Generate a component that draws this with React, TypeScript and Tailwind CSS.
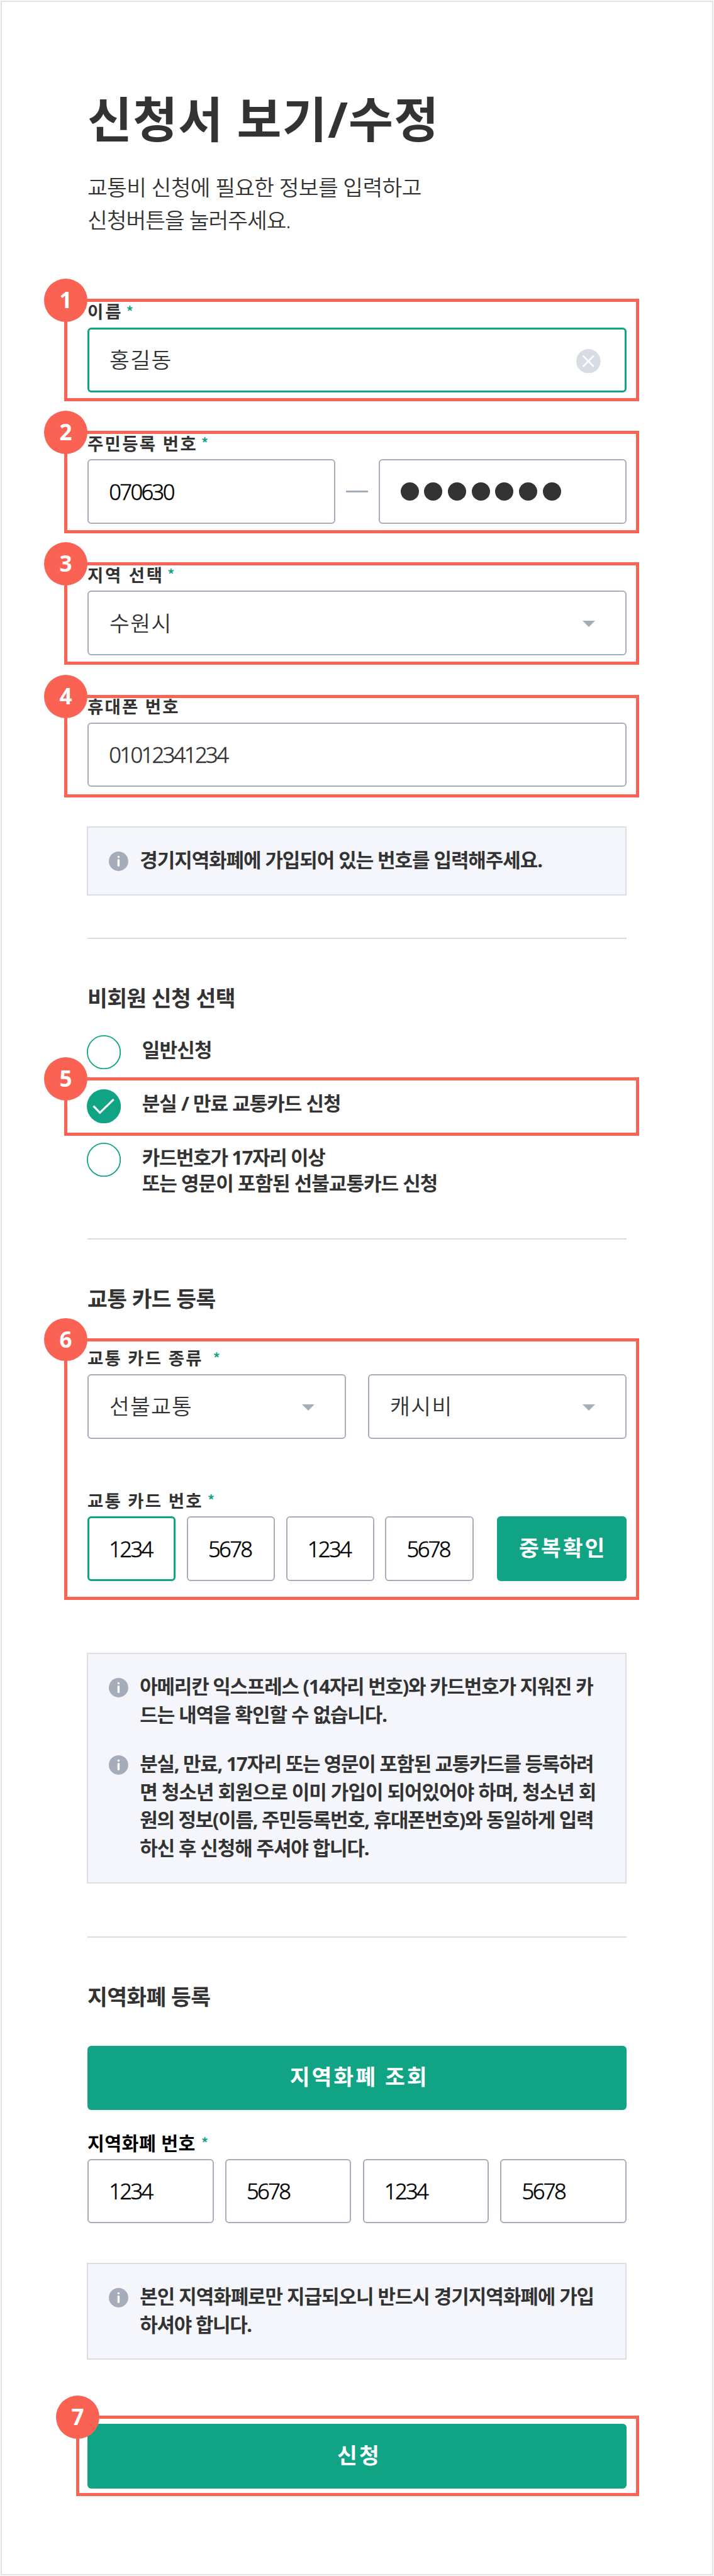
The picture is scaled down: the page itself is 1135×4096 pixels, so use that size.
import type { ReactNode } from "react";

const cn = (...c: (string | false | undefined)[]) => c.filter(Boolean).join(" ");

function Callout({ n, className }: { n: number; className: string }) {
  return (
    <div className={cn("pointer-events-none absolute z-10 border-[5px] border-[#fa6353]", className)}>
      <span className="absolute -left-[36.8px] -top-[36.8px] flex h-[68.6px] w-[68.6px] items-center justify-center rounded-full bg-[#fa6353] pb-[1px] text-[35px] leading-[40px] font-bold text-white">
        {n}
      </span>
    </div>
  );
}

function Label({ children, className, star }: { children: ReactNode; className: string; star?: string }) {
  return (
    <div className="flex h-[36px] items-start">
      <span className={cn("whitespace-nowrap leading-[36px] font-bold", className)}>{children}</span>
      {star && (
        <span className={cn("-mt-[1.8px] font-['Noto_Sans_CJK_KR',sans-serif] text-[24px] leading-[36px] font-medium text-[#10a485]", star)}>
          *
        </span>
      )}
    </div>
  );
}

function Box({ children, className, active }: { children?: ReactNode; className?: string; active?: boolean }) {
  return (
    <div
      className={cn(
        "flex h-[102.8px] items-center rounded-[6px] bg-white",
        active ? "border-[3px] border-[#10a485] px-[32px]" : "border-2 border-[#a5adbb] px-[33px]",
        className,
      )}
    >
      {children}
    </div>
  );
}

const Hangul = ({ children, className }: { children: ReactNode; className: string }) => (
  <span className={cn("text-[34.6px] leading-[50px] font-[350] whitespace-nowrap", className)}>{children}</span>
);

const Digits = ({ children, className }: { children: ReactNode; className?: string }) => (
  <span
    className={cn(
      "-ml-[0.8px] text-[34.6px] leading-[50px] font-light tracking-[-2.65px] whitespace-nowrap [-webkit-text-stroke:0.55px_currentColor]",
      className ?? "text-black",
    )}
  >
    {children}
  </span>
);

const Arrow = () => (
  <svg viewBox="0 0 20 10" className="mt-[3px] ml-auto mr-[15px] h-[10px] w-[20px]">
    <path d="M0 0h20L10 10z" fill="#a5adbb" />
  </svg>
);

const InfoIcon = () => (
  <svg viewBox="0 0 54 54" className="mt-[8.9px] mr-[18.4px] h-[30.9px] w-[30.9px] shrink-0">
    <circle cx="27" cy="27" r="27" fill="#a5adbb" />
    <circle cx="27" cy="15" r="3" fill="#fff" />
    <rect x="24" y="21" width="6" height="21" rx="3" fill="#fff" />
  </svg>
);

type Line = [string, string];

function Info({ items, className }: { items: Line[][]; className: string }) {
  return (
    <div
      className={cn(
        "flex flex-col gap-[33.9px] border-2 border-[#dbdfe5] bg-[#f5f6fc] pt-[29.4px] pb-[32px] pl-[32.6px]",
        className,
      )}
    >
      {items.map((lines, i) => (
        <div key={i} className="flex">
          <InfoIcon />
          <p className="text-[31px] leading-[44.6px] font-bold whitespace-nowrap">
            {lines.map(([text, tracking]) => (
              <span key={text} className={cn("block", tracking)}>
                {text}
              </span>
            ))}
          </p>
        </div>
      ))}
    </div>
  );
}

function Radio({ checked, children, className }: { checked?: boolean; children: ReactNode; className?: string }) {
  return (
    <div className={cn("relative flex items-start", className)}>
      <svg viewBox="0 0 54 54" className="-ml-[1.4px] h-[54.2px] w-[54.2px] shrink-0">
        {checked ? (
          <>
            <circle cx="27" cy="27" r="27" fill="#10a485" />
            <path d="M10.5 26.5l10.2 10.7L42.5 16" fill="none" stroke="#fff" strokeWidth="3.2" />
          </>
        ) : (
          <circle cx="27" cy="27" r="26.1" fill="#fff" stroke="#10a485" strokeWidth="1.8" />
        )}
      </svg>
      <div className="ml-[34px] flex flex-col pt-[2.8px] text-[31px] leading-[40.9px] font-bold whitespace-nowrap">{children}</div>
    </div>
  );
}

const Heading = ({ children, className }: { children: ReactNode; className: string }) => (
  <h2 className={cn("text-[34.6px] leading-[40px] font-bold tracking-[-0.65px] whitespace-nowrap", className)}>{children}</h2>
);

const Rule = ({ className }: { className: string }) => <div className={cn("h-[2px] bg-[#d8dde3]", className)} />;

const Button = ({ children, className }: { children: ReactNode; className: string }) => (
  <button
    type="button"
    className={cn(
      "flex h-[102.8px] items-center justify-center rounded-[6px] bg-[#10a485] pb-[3.4px] text-[34.6px] leading-[50px] font-bold text-white whitespace-nowrap",
      className,
    )}
  >
    {children}
  </button>
);

export default function App() {
  return (
    <div className="h-[4096px] w-[1135px] overflow-hidden bg-white p-px font-['Noto_Sans','Noto_Sans_CJK_KR',sans-serif] text-[#333333]">
      <div className="h-full border-2 border-[#dfe2e7] px-[136px]">
        <h1 className="mt-[137.4px] h-[100px] text-[77.1px] leading-[100px] font-bold tracking-[1.2px] whitespace-nowrap">
          신청서 보기/수정
        </h1>
        <p className="mt-[32.1px] text-[34.5px] leading-[51.4px] font-[350] whitespace-nowrap">
          <span className="block tracking-[-0.65px]">교통비 신청에 필요한 정보를 입력하고</span>
          <span className="block tracking-[-1px]">신청버튼을 눌러주세요.</span>
        </p>

        <div className="relative mt-[103px] w-[857px]">
          <Label className="text-[27.5px] tracking-[2.9px]" star="ml-[5px]">이름</Label>
          <Box active className="mt-[6.7px]">
            <Hangul className="tracking-[1.5px]">홍길동</Hangul>
            <svg viewBox="0 0 38 38" className="mt-[3px] mr-[6px] ml-auto h-[38.6px] w-[38.6px]">
              <circle cx="19" cy="19" r="19" fill="#d8dde3" />
              <path d="M11.2 11.2l15.6 15.6M26.8 11.2L11.2 26.8" stroke="#fff" strokeWidth="2.6" strokeLinecap="round" />
            </svg>
          </Box>
          <Callout n={1} className="-top-[3.1px] -right-[20px] -bottom-[14.7px] -left-[37px]" />
        </div>

        <div className="relative mt-[63.8px] w-[857px]">
          <Label className="text-[27.5px] tracking-[2.3px]" star="ml-[5.7px]">주민등록 번호</Label>
          <div className="mt-[6.7px] flex items-center">
            <Box className="w-[394px]">
              <Digits>070630</Digits>
            </Box>
            <div className="mx-[17px] h-[3.4px] w-[35px] bg-[#a5adbb]" />
            <Box className="ml-auto w-[394.5px]">
              <div className="flex gap-[8.7px]">
                {Array.from({ length: 7 }, (_, i) => (
                  <span key={i} className="h-[29px] w-[29px] rounded-full bg-[#333333]" />
                ))}
              </div>
            </Box>
          </div>
          <Callout n={2} className="-top-[2.8px] -right-[20px] -bottom-[14.6px] -left-[37px]" />
        </div>

        <div className="relative mt-[63.7px] w-[857px]">
          <Label className="text-[27.5px] tracking-[2.65px]" star="ml-[5.3px]">지역 선택</Label>
          <Box className="mt-[6.7px]">
            <Hangul className="tracking-[1.5px]">수원시</Hangul>
            <Arrow />
          </Box>
          <Callout n={3} className="-top-[2.8px] -right-[20px] -bottom-[14.4px] -left-[37px]" />
        </div>

        <div className="relative mt-[63.7px] w-[857px]">
          <Label className="text-[27.5px] tracking-[2.2px]">휴대폰 번호</Label>
          <Box className="mt-[6.7px]">
            <Digits className="text-[#333333]">01012341234</Digits>
          </Box>
          <Callout n={4} className="-top-[1.2px] -right-[20px] -bottom-[16.2px] -left-[37px]" />
        </div>

        <Info
          className="mt-[62.5px] w-[858px] -ml-[0.6px]"
          items={[[["경기지역화폐에 가입되어 있는 번호를 입력해주세요.", "tracking-[-1.07px]"]]]}
        />

        <Rule className="mt-[67.2px] w-[857px]" />

        <Heading className="mt-[74px]">비회원 신청 선택</Heading>
        <div className="mt-[38.8px] flex w-[857px] flex-col gap-[31.5px]">
          <Radio className="h-[54.2px]">
            <span className="tracking-[-0.8px]">일반신청</span>
          </Radio>
          <Radio checked className="h-[54.2px]">
            <span className="tracking-[-0.97px]">분실 / 만료 교통카드 신청</span>
            <Callout n={5} className="-top-[18.7px] -right-[20px] -bottom-[19.9px] -left-[37px]" />
          </Radio>
          <Radio>
            <span className="tracking-[-1.36px]">카드번호가 17자리 이상</span>
            <span className="tracking-[-0.95px]">또는 영문이 포함된 선불교통카드 신청</span>
          </Radio>
        </div>

        <Rule className="mt-[67.2px] w-[857px]" />

        <Heading className="mt-[74px]">교통 카드 등록</Heading>
        <div className="relative mt-[57.4px] w-[857px]">
          <Label className="text-[27.5px] tracking-[2.2px]" star="ml-[15.8px]">교통 카드 종류</Label>
          <div className="mt-[6.5px] flex justify-between">
            <Box className="w-[411px]">
              <Hangul className="tracking-[1.2px]">선불교통</Hangul>
              <Arrow />
            </Box>
            <Box className="w-[411px]">
              <Hangul className="tracking-[1.4px]">캐시비</Hangul>
              <Arrow />
            </Box>
          </div>
          <div className="mt-[80.9px]">
            <Label className="text-[27.5px] tracking-[2.2px]" star="ml-[7px]">교통 카드 번호</Label>
          </div>
          <div className="mt-[6.5px] flex">
            <div className="flex gap-[17.4px]">
              {["1234", "5678", "1234", "5678"].map((v, i) => (
                <Box key={i} active={i === 0} className="w-[140.4px]">
                  <Digits>{v}</Digits>
                </Box>
              ))}
            </div>
            <Button className="ml-auto w-[205.6px] pl-[3px] tracking-[3px]">중복확인</Button>
          </div>
          <Callout n={6} className="-top-[14.9px] -right-[20px] -bottom-[30px] -left-[37px]" />
        </div>

        <Info
          className="mt-[113.9px] w-[858px] -ml-[0.6px]"
          items={[
            [
              ["아메리칸 익스프레스 (14자리 번호)와 카드번호가 지워진 카", "tracking-[-1.23px]"],
              ["드는 내역을 확인할 수 없습니다.", "tracking-[-1.06px]"],
            ],
            [
              ["분실, 만료, 17자리 또는 영문이 포함된 교통카드를 등록하려", "tracking-[-1.31px]"],
              ["면 청소년 회원으로 이미 가입이 되어있어야 하며, 청소년 회", "tracking-[-0.99px]"],
              ["원의 정보(이름, 주민등록번호, 휴대폰번호)와 동일하게 입력", "tracking-[-1.29px]"],
              ["하신 후 신청해 주셔야 합니다.", "tracking-[-1.12px]"],
            ],
          ]}
        />

        <Rule className="mt-[84.7px] w-[857px]" />

        <Heading className="mt-[73.9px]">지역화폐 등록</Heading>
        <Button className="mt-[57.4px] w-[857px] pl-[7.4px] tracking-[3px]">지역화폐 조회</Button>

        <div className="mt-[34.9px]">
          <Label className="text-[29.2px] tracking-[0.45px] text-black" star="ml-[9px]">지역화폐 번호</Label>
        </div>
        <div className="mt-[6.2px] flex w-[857px] justify-between">
          {["1234", "5678", "1234", "5678"].map((v, i) => (
            <Box key={i} className="w-[200.6px]">
              <Digits>{v}</Digits>
            </Box>
          ))}
        </div>

        <Info
          className="mt-[62.3px] w-[858px] -ml-[0.6px]"
          items={[
            [
              ["본인 지역화폐로만 지급되오니 반드시 경기지역화폐에 가입", "tracking-[-1.05px]"],
              ["하셔야 합니다.", "tracking-[-1.3px]"],
            ],
          ]}
        />

        <div className="relative mt-[101.7px] w-[857px]">
          <Button className="w-full pl-[7px] tracking-[3.3px]">신청</Button>
          <Callout n={7} className="-top-[13.1px] -right-[20px] -bottom-[12.6px] -left-[18px]" />
        </div>
      </div>
    </div>
  );
}
